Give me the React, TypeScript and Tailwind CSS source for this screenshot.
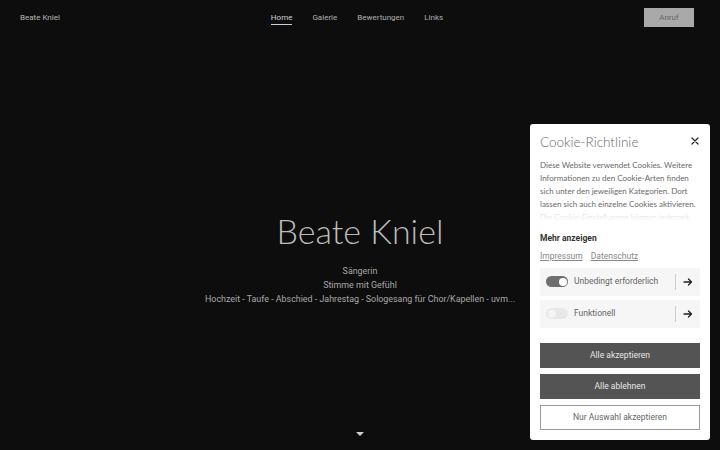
import React from "react";

const heading = { fontFamily: '"Lato", "Open Sans", sans-serif' };

function Toggle({ on }: { on: boolean }) {
  return (
    <div
      className={
        "flex h-[11px] w-[22px] items-center rounded-full px-[1.5px] " +
        (on ? "justify-end bg-[#6f6f6f]" : "justify-start bg-[#e8e8e8]")
      }
    >
      <div className={"h-[8px] w-[8px] rounded-full " + (on ? "bg-white" : "bg-[#f4f4f4]")} />
    </div>
  );
}

function Arrow() {
  return (
    <svg width="10" height="10" viewBox="0 0 10 10" fill="none" stroke="#222" strokeWidth="1.3" strokeLinecap="round" strokeLinejoin="round">
      <path d="M1 5h7.5M5.5 2l3 3-3 3" />
    </svg>
  );
}

function CookieRow({ on, label }: { on: boolean; label: string }) {
  return (
    <div className="flex h-[28px] items-center bg-[#f6f6f6] pl-[6px]">
      <Toggle on={on} />
      <span className="ml-[6px] flex-1 text-[8.5px] text-[#666]">{label}</span>
      <div className="h-[16px] w-px bg-[#cfcfcf]" />
      <div className="flex w-[24px] items-center justify-center">
        <Arrow />
      </div>
    </div>
  );
}

export default function App() {
  return (
    <div
      className="relative h-[450px] w-full overflow-hidden bg-[#0d0d0d] text-[#bdbdbd]"
      style={{ fontFamily: 'Roboto, "Liberation Sans", sans-serif' }}
    >
      <header className="grid h-[35px] grid-cols-[1fr_auto_1fr] items-center pl-[20px] pr-[26px] text-[8px]">
        <div className="text-[#b8b8b8]">Beate Kniel</div>
        <nav className="flex items-center gap-[20px] text-[#b0b0b0]">
          <span className="relative text-[#d0d0d0]">
            Home
            <span className="absolute left-0 right-0 top-[12px] h-px bg-[#cfcfcf]" />
          </span>
          <span>Galerie</span>
          <span>Bewertungen</span>
          <span>Links</span>
        </nav>
        <div className="flex justify-end">
          <div className="flex h-[19px] w-[50px] items-center justify-center bg-[#a9a9a9] text-[#666]">Anruf</div>
        </div>
      </header>

      <main className="flex flex-col items-center pt-[177px]">
        <h1 className="text-[34px] font-light leading-[38px] text-[#bcbcbc]" style={heading}>
          Beate Kniel
        </h1>
        <div className="mt-[14px] flex flex-col items-center text-[8.9px] leading-[14px] text-[#a8a8a8]">
          <div>Sängerin</div>
          <div>Stimme mit Gefühl</div>
          <div>Hochzeit - Taufe - Abschied - Jahrestag - Sologesang für Chor/Kapellen - uvm...</div>
        </div>
      </main>

      <div className="absolute bottom-[14px] left-[356px] h-0 w-0 border-x-[4px] border-t-[4px] border-x-transparent border-t-[#d0d0d0]" />

      <div className="absolute right-[10px] top-[124px] flex h-[316px] w-[180px] flex-col rounded-[3px] bg-white px-[10px] pt-[9px]">
        <div className="flex items-center justify-between">
          <div className="text-[13.5px] font-light leading-[18px] text-[#6a6a6a]" style={heading}>
            Cookie-Richtlinie
          </div>
          <svg width="8" height="8" viewBox="0 0 8 8" stroke="#222" strokeWidth="1.2" strokeLinecap="round" className="mr-[1px] -mt-[3px]">
            <path d="M1 1l6 6M7 1l-6 6" />
          </svg>
        </div>
        <div className="relative mt-[8px] h-[63px] overflow-hidden">
          <p className="text-[8px] leading-[13px] text-[#6a6a6a]" style={heading}>
            Diese Website verwendet Cookies. Weitere Informationen zu den Cookie-Arten finden sich unter den jeweiligen Kategorien. Dort lassen sich auch einzelne Cookies aktivieren. Die Cookie-Einstellungen können jederzeit geändert werden.
          </p>
          <div className="absolute bottom-0 left-0 right-0 h-[13px] bg-gradient-to-b from-white/60 to-white" />
        </div>
        <div className="mt-[10px] text-[8.5px] font-bold text-[#333]">Mehr anzeigen</div>
        <div className="mt-[5px] flex gap-[8px] text-[8.5px] text-[#888]">
          <span className="underline">Impressum</span>
          <span className="underline">Datenschutz</span>
        </div>
        <div className="mt-[5px] flex flex-col gap-[4px]">
          <CookieRow on={true} label="Unbedingt erforderlich" />
          <CookieRow on={false} label="Funktionell" />
        </div>
        <div className="mt-[15px] flex flex-col gap-[6px] text-[8.5px]">
          <div className="flex h-[25px] items-center justify-center bg-[#545454] text-[#e6e6e6]">Alle akzeptieren</div>
          <div className="flex h-[25px] items-center justify-center bg-[#545454] text-[#e6e6e6]">Alle ablehnen</div>
          <div className="flex h-[25px] items-center justify-center border border-[#9a9a9a] text-[#666]">Nur Auswahl akzeptieren</div>
        </div>
      </div>
    </div>
  );
}
